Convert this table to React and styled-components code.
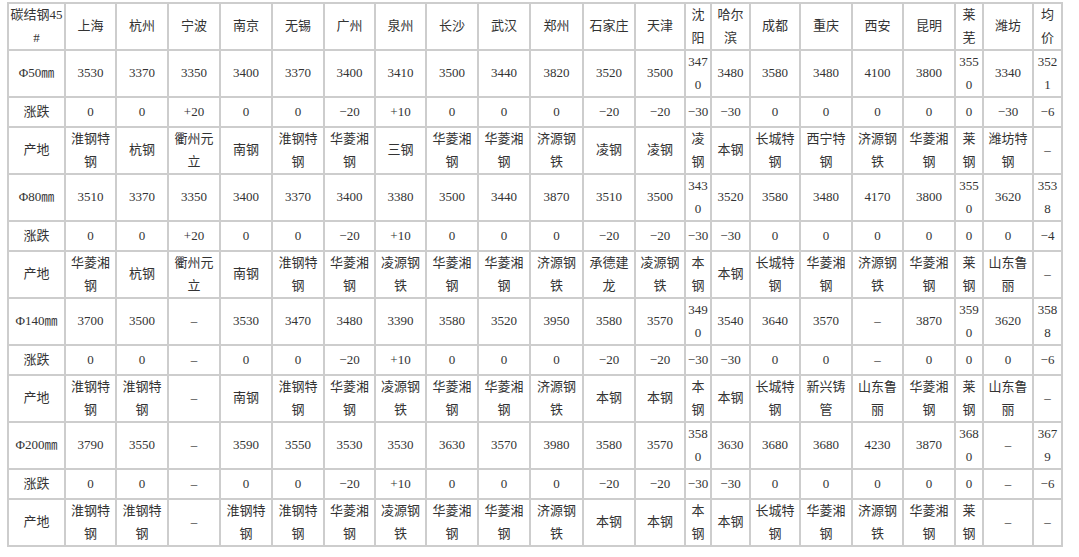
import React from 'react';
import styled, { createGlobalStyle } from 'styled-components';

const GlobalStyle = createGlobalStyle`
    body {
        margin: 0;
        background: #fff;
    }
`;

const widths = [57, 51, 52, 52, 52, 52, 51, 51, 52, 52, 53, 52, 50, 26, 39, 50, 52, 51, 52, 28, 50, 29];

const header = ['碳结钢45#', '上海', '杭州', '宁波', '南京', '无锡', '广州', '泉州', '长沙', '武汉', '郑州', '石家庄', '天津', '沈阳', '哈尔滨', '成都', '重庆', '西安', '昆明', '莱芜', '潍坊', '均价'];

const M = '−';
const D = '–';

const groups = [
    {
        size: 'Φ50㎜',
        price: ['3530', '3370', '3350', '3400', '3370', '3400', '3410', '3500', '3440', '3820', '3520', '3500', '3470', '3480', '3580', '3480', '4100', '3800', '3550', '3340', '3521'],
        change: ['0', '0', '+20', '0', '0', M + '20', '+10', '0', '0', '0', M + '20', M + '20', M + '30', M + '30', '0', '0', '0', '0', '0', M + '30', M + '6'],
        origin: ['淮钢特钢', '杭钢', '衢州元立', '南钢', '淮钢特钢', '华菱湘钢', '三钢', '华菱湘钢', '华菱湘钢', '济源钢铁', '凌钢', '凌钢', '凌钢', '本钢', '长城特钢', '西宁特钢', '济源钢铁', '华菱湘钢', '莱钢', '潍坊特钢', D],
    },
    {
        size: 'Φ80㎜',
        price: ['3510', '3370', '3350', '3400', '3370', '3400', '3380', '3500', '3440', '3870', '3510', '3500', '3430', '3520', '3580', '3480', '4170', '3800', '3550', '3620', '3538'],
        change: ['0', '0', '+20', '0', '0', M + '20', '+10', '0', '0', '0', M + '20', M + '20', M + '30', M + '30', '0', '0', '0', '0', '0', '0', M + '4'],
        origin: ['华菱湘钢', '杭钢', '衢州元立', '南钢', '淮钢特钢', '华菱湘钢', '凌源钢铁', '华菱湘钢', '华菱湘钢', '济源钢铁', '承德建龙', '凌源钢铁', '本钢', '本钢', '长城特钢', '华菱湘钢', '济源钢铁', '华菱湘钢', '莱钢', '山东鲁丽', D],
    },
    {
        size: 'Φ140㎜',
        price: ['3700', '3500', D, '3530', '3470', '3480', '3390', '3580', '3520', '3950', '3580', '3570', '3490', '3540', '3640', '3570', D, '3870', '3590', '3620', '3588'],
        change: ['0', '0', D, '0', '0', M + '20', '+10', '0', '0', '0', M + '20', M + '20', M + '30', M + '30', '0', '0', D, '0', '0', '0', M + '6'],
        origin: ['淮钢特钢', '淮钢特钢', D, '南钢', '淮钢特钢', '华菱湘钢', '凌源钢铁', '华菱湘钢', '华菱湘钢', '济源钢铁', '本钢', '本钢', '本钢', '本钢', '长城特钢', '新兴铸管', '山东鲁丽', '华菱湘钢', '莱钢', '山东鲁丽', D],
    },
    {
        size: 'Φ200㎜',
        price: ['3790', '3550', D, '3590', '3550', '3530', '3530', '3630', '3570', '3980', '3580', '3570', '3580', '3630', '3680', '3680', '4230', '3870', '3680', D, '3679'],
        change: ['0', '0', D, '0', '0', M + '20', '+10', '0', '0', '0', M + '20', M + '20', M + '30', M + '30', '0', '0', '0', '0', '0', D, M + '6'],
        origin: ['淮钢特钢', '淮钢特钢', D, '淮钢特钢', '淮钢特钢', '华菱湘钢', '凌源钢铁', '华菱湘钢', '华菱湘钢', '济源钢铁', '本钢', '本钢', '本钢', '本钢', '长城特钢', '华菱湘钢', '济源钢铁', '华菱湘钢', '莱钢', D, D],
    },
];

const App = () => {
    return (
        <>
            <GlobalStyle />
            <Page>
                <PriceTable>
                    <colgroup>
                        {widths.map((w, i) => <col key={i} style={{ width: w }} />)}
                    </colgroup>
                    <tbody>
                        <Row>
                            {header.map((h, i) => <Cell key={i}>{h}</Cell>)}
                        </Row>
                        {groups.map((g) => (
                            <React.Fragment key={g.size}>
                                <Row>
                                    <Cell>{g.size}</Cell>
                                    {g.price.map((v, i) => <Cell key={i}>{v}</Cell>)}
                                </Row>
                                <Row $short>
                                    <Cell>涨跌</Cell>
                                    {g.change.map((v, i) => <Cell key={i}>{v}</Cell>)}
                                </Row>
                                <Row>
                                    <Cell>产地</Cell>
                                    {g.origin.map((v, i) => <Cell key={i}>{v}</Cell>)}
                                </Row>
                            </React.Fragment>
                        ))}
                    </tbody>
                </PriceTable>
            </Page>
        </>
    )
}

export default App;


const Page = styled.div`
    padding: 2px 0 0 7px;
`;

const PriceTable = styled.table`
    width: 1056px;
    table-layout: fixed;
    border-collapse: collapse;
    border: 2px solid #cdcdcd;
    font-family: "Liberation Serif", "Noto Sans CJK SC", serif;
    font-size: 13px;
    color: #333;
`;

const Row = styled.tr`
    height: ${(p) => (p.$short ? '30px' : '47px')};
`;

const Cell = styled.td`
    border: 2px solid #cdcdcd;
    padding: 0 1px;
    line-height: 22.5px;
    text-align: center;
    vertical-align: middle;
    word-break: break-all;
`;
